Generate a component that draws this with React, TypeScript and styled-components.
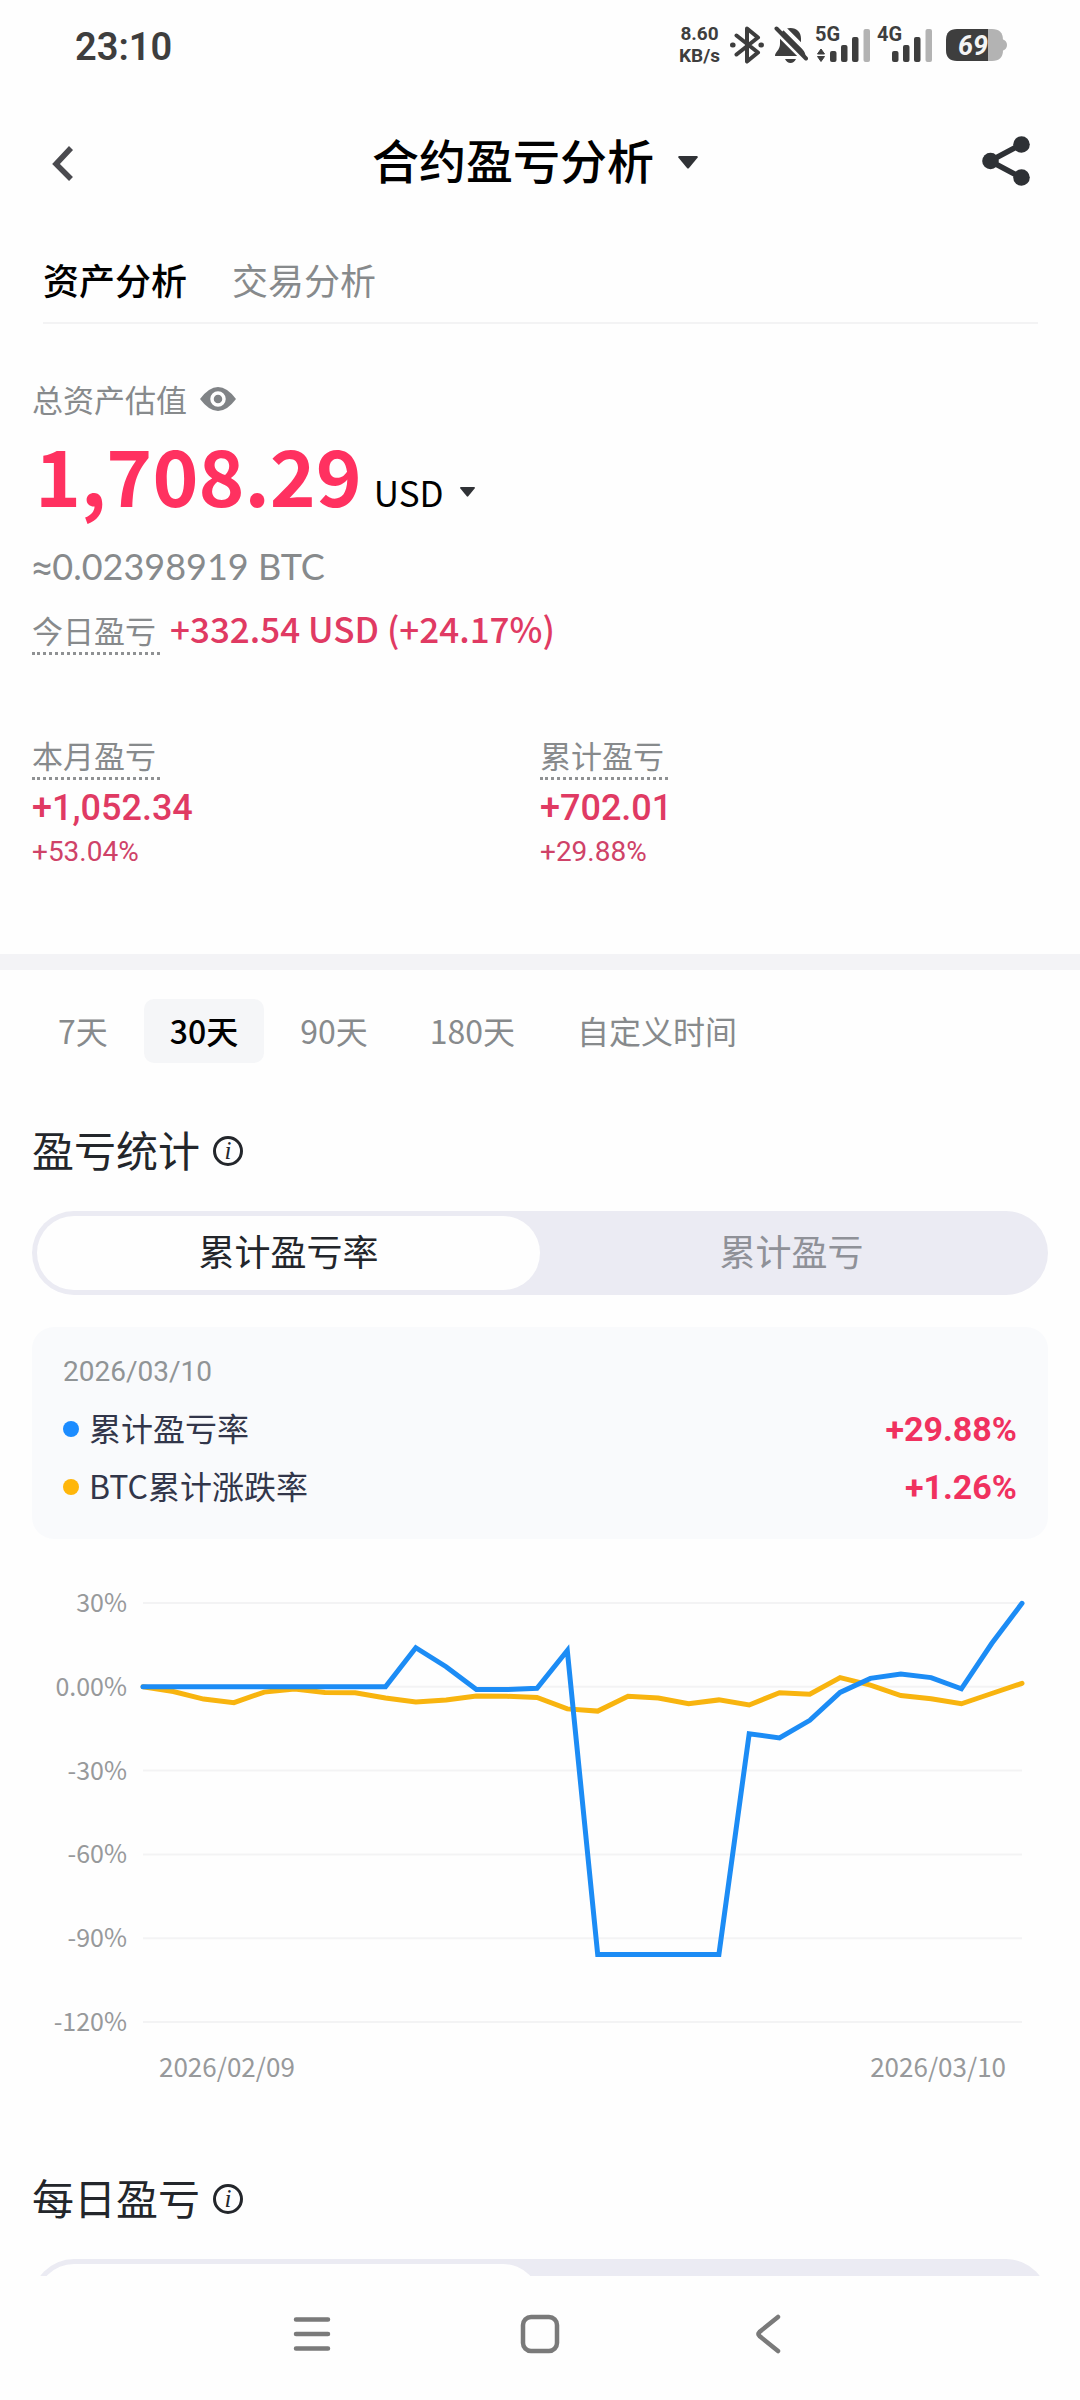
import React, { useState } from "react";
import styled, { createGlobalStyle } from "styled-components";

const cjk = `"Noto Sans CJK SC", "Noto Sans", sans-serif`;
const din = `Roboto, "Noto Sans CJK SC", sans-serif`;

const color = {
  ink: "#000000",
  heading: "#23262b",
  muted: "#878a8c",
  axis: "#97999b",
  up: "#e03a63",
  upStrong: "#ff3160",
  upBold: "#f0315f",
  blue: "#1c8cf5",
  yellow: "#f8b40f",
  track: "#ebebf3",
  status: "#3e3e3e",
};

const GlobalStyle = createGlobalStyle`
  * { box-sizing: border-box; }
  body { margin: 0; background: #fefefe; }
  button { border: 0; padding: 0; margin: 0; background: none; font: inherit; color: inherit; cursor: pointer; }
  h1, h2, p, dl, dt, dd { margin: 0; font-size: inherit; font-weight: inherit; }
`;

const Screen = styled.div`
  display: flex;
  flex-direction: column;
  height: 100vh;
  background: #fefefe;
  font-family: ${cjk};
  color: ${color.ink};
`;

const StatusBar = styled.div`
  display: flex;
  align-items: center;
  justify-content: space-between;
  flex: none;
  height: 90px;
  padding: 0 73px 0 75px;
  color: ${color.status};
  font-family: ${din};
`;

const Clock = styled.span`
  padding-top: 4px;
  font-size: 38px;
  line-height: 48px;
  font-weight: 600;
`;

const StatusIcons = styled.div`
  display: flex;
  align-items: center;
  gap: 8px;
`;

const Speed = styled.span`
  display: flex;
  flex-direction: column;
  align-items: center;
  font-size: 19px;
  line-height: 22px;
  font-weight: 700;
`;

const Header = styled.header`
  display: grid;
  grid-template-columns: 1fr auto 1fr;
  align-items: center;
  flex: none;
  height: 142px;
  padding: 0 50px;
`;

const IconButton = styled.button<{ $end?: boolean }>`
  display: flex;
  align-items: center;
  justify-self: ${(p) => (p.$end ? "end" : "start")};
`;

const TitleButton = styled.button`
  display: flex;
  align-items: center;
  gap: 24px;
  padding: 0 10px 4px 0;
  font-size: 47px;
  line-height: 60px;
  font-weight: 500;
`;

const TitleCaret = styled.span`
  display: flex;
  padding-top: 6px;
`;

const Tabs = styled.nav`
  display: flex;
  flex: none;
  gap: 45px;
  margin: 0 42px 0 43px;
  padding: 23px 0 19px;
  border-bottom: 2px solid #f3f3f4;
`;

const Tab = styled.button<{ $active: boolean }>`
  font-size: 36px;
  line-height: 48px;
  font-weight: ${(p) => (p.$active ? 500 : 400)};
  color: ${(p) => (p.$active ? color.ink : color.muted)};
`;

const Content = styled.main`
  flex: 1;
  min-height: 0;
  overflow: hidden;
`;

const Overview = styled.section`
  padding: 51px 32px 84px;
  border-bottom: 16px solid #f3f3f6;
`;

const TotalLabel = styled.div`
  display: flex;
  align-items: center;
  gap: 13px;
  font-size: 31px;
  line-height: 48px;
  color: ${color.muted};
`;

const TotalRow = styled.div`
  display: flex;
  align-items: baseline;
  gap: 12px;
  padding-left: 3px;
  line-height: 100px;
`;

const Total = styled.span`
  font-size: 78px;
  font-weight: 700;
  color: ${color.upStrong};
`;

const Currency = styled.button`
  display: flex;
  align-items: center;
  gap: 16px;
  font-size: 35px;
  line-height: 48px;
`;

const Approx = styled.p`
  margin-top: 19px;
  font-family: Lato, ${din};
  font-size: 36px;
  line-height: 48px;
  color: ${color.muted};
`;

const ApproxSign = styled.span`
  font-family: ${din};
`;

const TodayRow = styled.div`
  display: flex;
  align-items: baseline;
  gap: 10px;
  margin-top: 14px;
`;

const Dotted = styled.span`
  display: inline-block;
  padding-right: 4px;
  border-bottom: 3px dotted #8f9193;
  font-size: 31px;
  line-height: 44px;
  color: ${color.muted};
`;

const TodayValue = styled.span`
  font-size: 35px;
  line-height: 44px;
  font-weight: 500;
  color: ${color.up};
`;

const Stats = styled.dl`
  display: grid;
  grid-template-columns: 1fr 1fr;
  margin-top: 78px;
`;

const StatLabel = styled.dt`
  display: flex;
`;

const StatValue = styled.dd`
  margin-top: 8px;
  font-family: ${din};
  font-size: 36px;
  line-height: 40px;
  font-weight: 500;
  color: ${color.up};
`;

const StatRate = styled.dd`
  margin-top: 6px;
  font-family: ${din};
  font-size: 28px;
  line-height: 36px;
  color: #cf4268;
`;

const Panel = styled.section`
  padding: 29px 32px 0;
`;

const Ranges = styled.div`
  display: flex;
  gap: 10px;
`;

const Range = styled.button<{ $active: boolean }>`
  height: 64px;
  padding: 0 26px 2px;
  border-radius: 10px;
  background: ${(p) => (p.$active ? "#f5f6f8" : "transparent")};
  font-size: 32px;
  line-height: 60px;
  font-weight: ${(p) => (p.$active ? 500 : 400)};
  color: ${(p) => (p.$active ? color.ink : color.muted)};
`;

const Heading = styled.div<{ $gap: number }>`
  display: flex;
  align-items: center;
  gap: 13px;
  margin-top: ${(p) => p.$gap}px;
  font-size: 42px;
  line-height: 60px;
  color: ${color.heading};
`;

const Info = styled.button`
  display: flex;
  align-items: center;
  justify-content: center;
  width: 30px;
  height: 30px;
  margin-top: 4px;
  border: 3px solid ${color.heading};
  border-radius: 50%;
  font-family: "Liberation Serif", serif;
  font-style: italic;
  font-size: 25px;
  line-height: 24px;
`;

const Segmented = styled.div`
  display: grid;
  grid-template-columns: 1fr 1fr;
  height: 84px;
  margin-top: 32px;
  padding: 5px;
  border-radius: 42px;
  background: ${color.track};
`;

const Segment = styled.button<{ $active: boolean }>`
  padding-bottom: 6px;
  border-radius: 37px;
  background: ${(p) => (p.$active ? "#fefefe" : "transparent")};
  font-size: 36px;
  line-height: 64px;
  color: ${(p) => (p.$active ? color.heading : "#8f9198")};
`;

const Card = styled.div`
  margin-top: 32px;
  padding: 25px 31px 23px;
  border-radius: 22px;
  background: #f9fafc;
`;

const CardDate = styled.p`
  margin-bottom: 8px;
  font-family: ${din};
  font-size: 28px;
  line-height: 40px;
  color: #909496;
`;

const LegendRow = styled.div`
  display: flex;
  align-items: center;
  height: 58px;
`;

const Dot = styled.span<{ $color: string }>`
  width: 16px;
  height: 16px;
  margin-right: 10px;
  border-radius: 50%;
  background: ${(p) => p.$color};
`;

const LegendName = styled.span`
  flex: 1;
  padding-bottom: 4px;
  font-size: 32px;
  line-height: 54px;
  color: #32364a;
`;

const LegendValue = styled.span`
  font-family: ${din};
  font-size: 34px;
  line-height: 58px;
  font-weight: 700;
  color: ${color.upBold};
`;

const Chart = styled.div`
  display: grid;
  grid-template-columns: 95px 1fr;
  column-gap: 16px;
  margin: 44px 26px 0 0;
  color: ${color.axis};
  font-size: 25px;
  line-height: 36px;
`;

const AxisLabels = styled.div`
  display: flex;
  flex-direction: column;
  justify-content: space-between;
  text-align: right;
`;

const Plot = styled.svg`
  display: block;
  width: 100%;
  height: auto;
  margin: 20px 0 16px;
  overflow: visible;
`;

const Dates = styled.div`
  grid-column: 2;
  display: flex;
  justify-content: space-between;
  margin-top: 10px;
  padding: 0 16px;
  font-size: 26px;
`;

const NavBar = styled.nav`
  display: flex;
  align-items: center;
  justify-content: center;
  gap: 188px;
  flex: none;
  height: 124px;
  padding-bottom: 8px;
  background: #fefefe;
`;

const SignalIcon = styled.svg`
  overflow: visible;
`;

const Caret = ({ w, h }: { w: number; h: number }) => (
  <svg width={w} height={h} viewBox="0 0 20 13" preserveAspectRatio="none" aria-hidden="true">
    <path d="M1 0h18q1.400.6.5 1.800L11 12q-1 1.200-2 0L.5 1.800Q-.4.600 1 0z" fill="#303236" />
  </svg>
);

const Signal = ({ label, arrows }: { label: string; arrows?: boolean }) => (
  <SignalIcon width="54" height="36" viewBox="0 0 54 36" role="img" aria-label={label}>
    <text x="-1" y="14" fontFamily="Roboto, sans-serif" fontWeight="700" fontSize="20" fill={color.status}>
      {label}
    </text>
    {arrows && (
      <path d="M5 22l3.500 5h-7zM5 34.500l3.500-5h-7z" fill={color.status} stroke={color.status} strokeLinejoin="round" />
    )}
    <g fill={color.status}>
      <rect x="14" y="24" width="6.500" height="11" rx="2" />
      <rect x="25" y="18" width="6.500" height="17" rx="2" />
      <rect x="36" y="10" width="6.500" height="25" rx="2" />
    </g>
    <rect x="47.500" y="2" width="6.500" height="33" rx="2" fill="#b3b3b3" />
  </SignalIcon>
);

const Bluetooth = () => (
  <svg width="38" height="38" viewBox="0 0 38 38" fill="none" stroke={color.status} strokeWidth="4" strokeLinecap="round" strokeLinejoin="round" aria-label="蓝牙">
    <path d="M8.500 9.500L30 26.500 19 35.500V2.500L30 11.500 8.500 28.500" />
    <path d="M4.500 19h.6M32.900 19h.6" strokeWidth="5" />
  </svg>
);

const BellOff = () => (
  <svg width="34" height="38" viewBox="0 0 34 38" aria-label="静音">
    <path d="M16.500 2c6.500 0 10.500 4.500 10.500 10.500V18c0 5 4.500 7 4.500 12H1c0-4 5-6 5-12v-5.500C6 6.500 10 2 16.500 2z" fill={color.status} />
    <path d="M11 33h11q-2 4-5.500 4T11 33z" fill={color.status} />
    <path d="M-2 2L32 36M6 -2L38 30" stroke="#fefefe" strokeWidth="4" />
    <path d="M2.500 2.500l29.500 30" stroke={color.status} strokeWidth="4" strokeLinecap="round" />
  </svg>
);

const Battery = () => (
  <svg width="67" height="34" viewBox="0 0 67 34" role="img" aria-label="电量 69">
    <path d="M61 11h1q5 1.500 5 6t-5 6h-1z" fill="#b3b3b3" />
    <path d="M48 1h4q11 0 11 11v10q0 11-11 11h-4z" fill="#b3b3b3" />
    <path d="M48 1v32H17Q6 33 6 22V12Q6 1 17 1z" fill={color.status} />
    <text x="18" y="27" fontFamily="Roboto, sans-serif" fontWeight="700" fontStyle="italic" fontSize="27" fill="#f4f4f4">
      69
    </text>
  </svg>
);

const BackIcon = () => (
  <svg width="24" height="42" viewBox="0 0 24 42" fill="none" aria-hidden="true">
    <path d="M21 8L6 24l15 15" stroke="#4a4a4f" strokeWidth="5.500" />
  </svg>
);

const ShareIcon = () => (
  <svg width="48" height="50" viewBox="0 0 48 50" aria-hidden="true">
    <path d="M39 8.500L8 25l31 16.500" fill="none" stroke="#2e3135" strokeWidth="5.500" />
    <circle cx="8.500" cy="25" r="8.300" fill="#2e3135" />
    <circle cx="39.500" cy="8.500" r="8.300" fill="#2e3135" />
    <circle cx="39.500" cy="41.500" r="8.300" fill="#2e3135" />
  </svg>
);

const EyeIcon = () => (
  <svg width="36" height="24" viewBox="0 0 36 24" aria-hidden="true">
    <path d="M0 12Q9 0 18 0t18 12Q27 24 18 24T0 12z" fill="#808386" />
    <circle cx="18" cy="12" r="6" fill="#808386" stroke="#fefefe" strokeWidth="3.500" />
  </svg>
);

// Daily values in percent, one per day from 02/09 to 03/10.
const pnl = [
  0, 0, 0, 0, 0, 0, 0, 0, 0, 14, 7.2, -1, -1, -0.5, 13, -95.8, -95.8, -95.8, -95.8, -95.8, -16.8, -18.3, -12,
  -2, 3, 4.6, 3.3, -0.7, 15.5, 29.88,
];
const btc = [
  0, -1.7, -4.4, -5.7, -1.9, -0.8, -2, -2.1, -4, -5.4, -4.7, -3.3, -3.4, -3.8, -7.9, -8.7, -3.4, -4, -6.1, -4.7,
  -6.5, -2.1, -2.7, 3.3, 0.6, -3.1, -4.3, -6.1, -2.4, 1.26,
];
const ticks = ["30%", "0.00%", "-30%", "-60%", "-90%", "-120%"];

const W = 879;
const H = 419;
const toPoints = (values: number[]) =>
  values.map((v, i) => `${((i * W) / (values.length - 1)).toFixed(1)},${(((30 - v) * H) / 150).toFixed(1)}`).join(" ");

const TrendChart = () => (
  <Chart>
    <AxisLabels>
      {ticks.map((t) => (
        <span key={t}>{t}</span>
      ))}
    </AxisLabels>
    <Plot viewBox={`0 0 ${W} ${H}`} role="img" aria-label="累计盈亏率">
      {ticks.map((t, i) => (
        <line key={t} x1="0" x2={W} y1={(i * H) / 5} y2={(i * H) / 5} stroke="#f3f3f4" strokeWidth="2" />
      ))}
      <g fill="none" strokeWidth="5" strokeLinecap="round" strokeMiterlimit="8">
        <polyline points={toPoints(btc)} stroke={color.yellow} />
        <polyline points={toPoints(pnl)} stroke={color.blue} />
      </g>
    </Plot>
    <Dates>
      <span>2026/02/09</span>
      <span>2026/03/10</span>
    </Dates>
  </Chart>
);

const SegmentedControl = ({ options }: { options: string[] }) => {
  const [active, setActive] = useState(0);
  return (
    <Segmented>
      {options.map((o, i) => (
        <Segment key={i} $active={i === active} onClick={() => setActive(i)}>
          {o}
        </Segment>
      ))}
    </Segmented>
  );
};

const SectionHeading = ({ title, gap }: { title: string; gap: number }) => (
  <Heading $gap={gap}>
    <h2>{title}</h2>
    <Info aria-label={title}>i</Info>
  </Heading>
);

const ranges = ["7天", "30天", "90天", "180天", "自定义时间"];
const stats = [
  { label: "本月盈亏", value: "+1,052.34", rate: "+53.04%" },
  { label: "累计盈亏", value: "+702.01", rate: "+29.88%" },
];
const legend = [
  { name: "累计盈亏率", value: "+29.88%", dot: "#1c8cff" },
  { name: "BTC累计涨跌率", value: "+1.26%", dot: "#ffb60a" },
];

export default function App() {
  const [tab, setTab] = useState("资产分析");
  const [range, setRange] = useState("30天");

  return (
    <Screen>
      <GlobalStyle />
      <StatusBar>
        <Clock>23:10</Clock>
        <StatusIcons>
          <Speed>
            <span>8.60</span>
            <span>KB/s</span>
          </Speed>
          <Bluetooth />
          <BellOff />
          <Signal label="5G" arrows />
          <Signal label="4G" />
          <Battery />
        </StatusIcons>
      </StatusBar>

      <Header>
        <IconButton aria-label="返回">
          <BackIcon />
        </IconButton>
        <TitleButton>
          <h1>合约盈亏分析</h1>
          <TitleCaret>
            <Caret w={20} h={13} />
          </TitleCaret>
        </TitleButton>
        <IconButton $end aria-label="分享">
          <ShareIcon />
        </IconButton>
      </Header>

      <Tabs>
        {["资产分析", "交易分析"].map((t) => (
          <Tab key={t} $active={t === tab} onClick={() => setTab(t)}>
            {t}
          </Tab>
        ))}
      </Tabs>

      <Content>
        <Overview>
          <TotalLabel>
            总资产估值
            <IconButton aria-label="隐藏金额">
              <EyeIcon />
            </IconButton>
          </TotalLabel>
          <TotalRow>
            <Total>1,708.29</Total>
            <Currency>
              USD
              <Caret w={15} h={10} />
            </Currency>
          </TotalRow>
          <Approx>
            <ApproxSign>≈</ApproxSign>0.02398919 BTC
          </Approx>
          <TodayRow>
            <Dotted>今日盈亏</Dotted>
            <TodayValue>+332.54 USD (+24.17%)</TodayValue>
          </TodayRow>
          <Stats>
            {stats.map((s) => (
              <div key={s.label}>
                <StatLabel>
                  <Dotted>{s.label}</Dotted>
                </StatLabel>
                <StatValue>{s.value}</StatValue>
                <StatRate>{s.rate}</StatRate>
              </div>
            ))}
          </Stats>
        </Overview>

        <Panel>
          <Ranges>
            {ranges.map((r) => (
              <Range key={r} $active={r === range} onClick={() => setRange(r)}>
                {r}
              </Range>
            ))}
          </Ranges>

          <SectionHeading title="盈亏统计" gap={56} />
          <SegmentedControl options={["累计盈亏率", "累计盈亏"]} />

          <Card>
            <CardDate>2026/03/10</CardDate>
            {legend.map((l) => (
              <LegendRow key={l.name}>
                <Dot $color={l.dot} />
                <LegendName>{l.name}</LegendName>
                <LegendValue>{l.value}</LegendValue>
              </LegendRow>
            ))}
          </Card>

          <TrendChart />

          <SectionHeading title="每日盈亏" gap={83} />
          <SegmentedControl options={["", ""]} />
        </Panel>
      </Content>

      <NavBar>
        <IconButton aria-label="最近任务">
          <svg width="40" height="40" viewBox="0 0 40 40" stroke="#7a7a7a" strokeWidth="4.500" strokeLinecap="round">
            <path d="M4 5.500h32M4 20h32M4 34.500h32" />
          </svg>
        </IconButton>
        <IconButton aria-label="主页">
          <svg width="40" height="40" viewBox="0 0 40 40" fill="none" stroke="#7a7a7a" strokeWidth="4.500">
            <rect x="3" y="3" width="34" height="34" rx="8" />
          </svg>
        </IconButton>
        <IconButton aria-label="返回上一级">
          <svg width="40" height="40" viewBox="0 0 40 40" fill="none" stroke="#7a7a7a" strokeWidth="4.500" strokeLinecap="round">
            <path d="M30 3L11.500 18q-2 2 0 4L30 37" />
          </svg>
        </IconButton>
      </NavBar>
    </Screen>
  );
}
